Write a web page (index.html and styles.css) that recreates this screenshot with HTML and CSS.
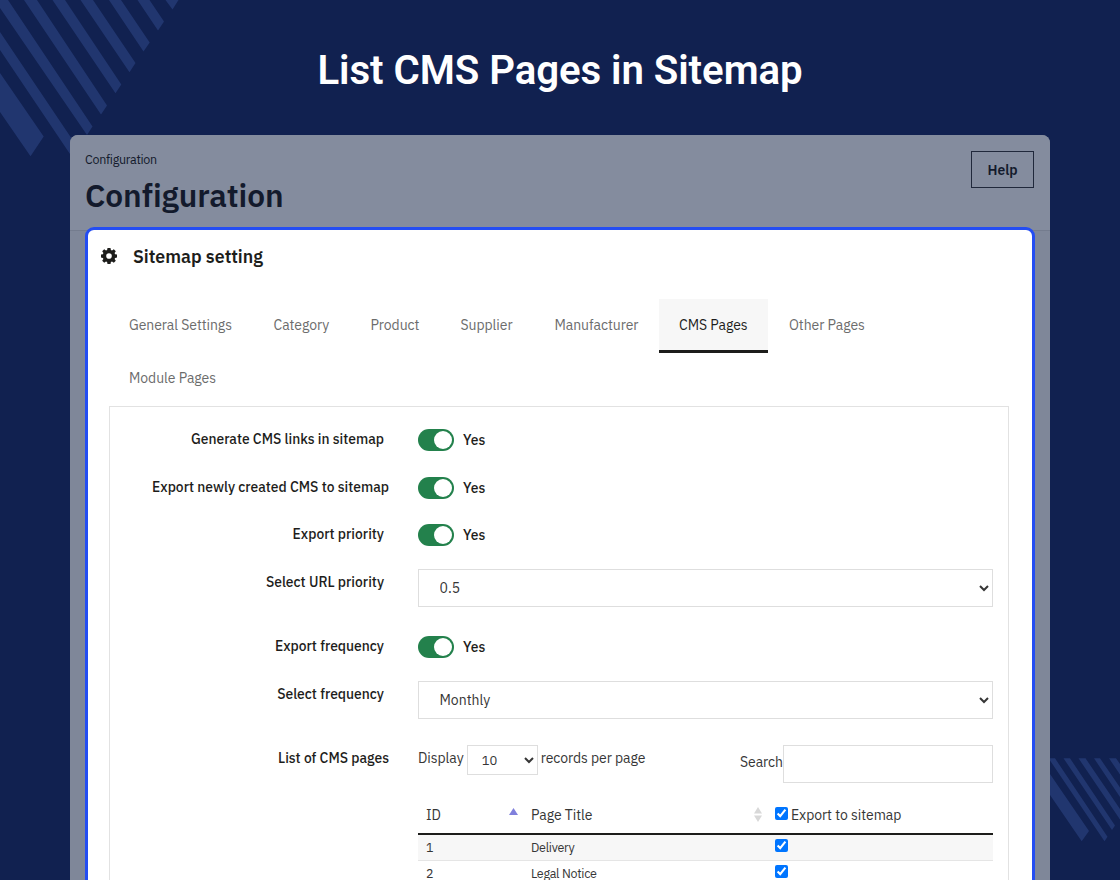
FILE: index.html
```html
<!DOCTYPE html>
<html lang="en">
<head>
    <meta charset="UTF-8">
    <meta name="viewport" content="width=device-width, initial-scale=1.0">
    <title>List CMS Pages in Sitemap</title>
    <link rel="stylesheet" href="styles.css">
</head>
<body>
    <!-- Background stripes -->
    <svg class="stripes" width="1120" height="880" viewBox="0 0 1120 880">
        <path d="M0 73 43.7 136.5 30.5 156.3 0 112Z M0 32 78 148 72 157 0 50Z M0 0H8L92.5 126.5 87 135 0 8Z M24 0H37L107 105.5 101 114.5Z M52.5 0H65L121.3 84.5 115.5 93.2Z M80.500 0H93L135.500 63 129.500 72.200Z M109 0H121L149.700 42.500 143.500 51.500Z M137.500 0H149.500L164 21.500 158 30.500Z M165.500 0H178.500L172.500 9.500Z"/>
        <path d="M1050 774 1089 831 1081.700 841.300 1050 795Z M1049 758.300H1055L1107.500 836.700 1104.500 841.300 1049 759Z M1063.500 758.300H1070L1115 825.500 1112 830Z M1078.500 758.300H1085.500L1120 809V819.500Z M1094 758.300H1100L1120 787.500V797Z M1109 758.300H1116L1120 764V774.500Z"/>
    </svg>

    <h1 class="headline">List CMS Pages in Sitemap</h1>

    <div class="window">
        <header class="page-head">
            <div>
                <div class="breadcrumb">Configuration</div>
                <h2 class="page-title">Configuration</h2>
            </div>
            <button class="help">Help</button>
        </header>

        <section class="card">
            <div class="card-title">
                <svg width="16" height="16" viewBox="0 0 16 16">
                    <path fill-rule="evenodd" d="M6.500 0h3l.4 2 1.100.5 1.800-1.200 2 2-1.200 1.800.5 1.100 1.900.3v3l-1.900.4-.5 1.100 1.200 1.800-2 2-1.800-1.200-1.100.5-.4 1.900h-3l-.4-1.900-1.100-.5-1.800 1.200-2-2 1.200-1.800-.5-1.100L0 9.500v-3l1.900-.3.5-1.100-1.200-1.800 2-2L5 2.500 6.100 2zM8 5.200a2.800 2.800 0 1 0 0 5.600 2.800 2.800 0 0 0 0-5.600z"/>
                </svg>
                <span>Sitemap setting</span>
            </div>

            <nav class="tabs">
                <a class="tab general">General Settings</a>
                <a class="tab category">Category</a>
                <a class="tab product">Product</a>
                <a class="tab supplier">Supplier</a>
                <a class="tab manufacturer">Manufacturer</a>
                <a class="tab cms active">CMS Pages</a>
                <a class="tab other">Other Pages</a>
                <a class="tab module">Module Pages</a>
            </nav>

            <div class="panel">
                <div class="row">
                    <label class="name">Generate CMS links in sitemap</label>
                    <div class="field"><span class="switch"></span><span class="yes">Yes</span></div>
                </div>
                <div class="row">
                    <label class="name wide">Export newly created CMS to sitemap</label>
                    <div class="field"><span class="switch"></span><span class="yes">Yes</span></div>
                </div>
                <div class="row">
                    <label class="name">Export priority</label>
                    <div class="field"><span class="switch"></span><span class="yes">Yes</span></div>
                </div>
                <div class="row select-row">
                    <label class="name">Select URL priority</label>
                    <select class="select"><option>0.5</option></select>
                </div>
                <div class="row">
                    <label class="name">Export frequency</label>
                    <div class="field"><span class="switch"></span><span class="yes">Yes</span></div>
                </div>
                <div class="row select-row">
                    <label class="name">Select frequency</label>
                    <select class="select"><option>Monthly</option></select>
                </div>
                <div class="row list-row">
                    <label class="name wide">List of CMS pages</label>
                    <div class="list">
                        <div class="list-tools">
                            <div class="length"><span class="display">Display</span><select class="select small"><option>10</option></select><span class="records">records per page</span></div>
                            <label class="search"><span>Search</span><input type="text"></label>
                        </div>
                        <table>
                            <thead>
                                <tr>
                                    <th class="col-id"><div class="th"><span>ID</span>
                                        <svg class="sort-asc" width="9" height="7" viewBox="0 0 9 7"><path d="M4.500 0 9 7H0Z"/></svg></div></th>
                                    <th class="col-title"><div class="th"><span>Page Title</span>
                                        <svg class="sort" width="8" height="15" viewBox="0 0 8 15"><path d="M4 0 8 6.500H0Z M0 8.500H8L4 15Z"/></svg></div></th>
                                    <th><div class="th export"><input type="checkbox" checked><span>Export to sitemap</span></div></th>
                                </tr>
                            </thead>
                            <tbody>
                                <tr><td>1</td><td>Delivery</td><td><input type="checkbox" checked></td></tr>
                                <tr><td>2</td><td>Legal Notice</td><td><input type="checkbox" checked></td></tr>
                            </tbody>
                        </table>
                    </div>
                </div>
            </div>
        </section>
    </div>
</body>
</html>
```

FILE: styles.css
```css
* { margin: 0; padding: 0; box-sizing: border-box; }
body { width: 1120px; height: 880px; overflow: hidden; background: #112150; color: #1d1d1b; font: 14px/20px "IBM Plex Sans", Roboto, Arial, sans-serif; letter-spacing: -0.06px; }

.stripes { position: absolute; top: 0; left: 0; z-index: -1; fill: #21366f; }
.headline { height: 135px; padding-top: 46px; text-align: center; color: #fff; font: 600 40.2px/49px Roboto, sans-serif; }

/* Dimmed back office page */
.window { width: 980px; height: 745px; margin: 0 auto; background: #7f8799; border-radius: 8px 8px 0 0; overflow: hidden; }
.page-head { display: flex; justify-content: space-between; height: 96px; padding: 16px 16px 0 15px; background: #848c9e; border-bottom: 1px solid #747c8e; color: #131a2c; }
.breadcrumb { font-size: 12.5px; line-height: 17px; letter-spacing: -0.28px; }
.page-title { margin-top: 6px; font-size: 31.7px; line-height: 44px; font-weight: 600; }
.help { width: 63px; height: 37px; border: 1px solid #20283b; background: none; color: #131a2c; font: 600 13.87px/20px "IBM Plex Sans", Roboto, sans-serif; }

/* Highlighted card */
.card { position: relative; height: 680px; margin: -4px 15px 0; background: #fff; border: 3px solid #244df2; border-radius: 9px; }
.card-title { display: flex; align-items: center; gap: 16px; height: 53px; padding-left: 13px; font-size: 17.8px; font-weight: 600; letter-spacing: 0; }
.card-title svg { margin-top: -1px; fill: #1d1d1b; }

/* Tabs */
.tabs { display: flex; flex-wrap: wrap; margin: 16px 20px 0 21px; }
.tab { height: 54px; padding: 16px 20px; margin-right: 1px; color: #6c6c6c; line-height: 20px; white-space: nowrap; }
.tab.active { background: #f7f7f7; border-bottom: 3px solid #1d1d1b; color: #1d1d1b; }
.general { width: 143.5px; }
.category { width: 96px; }
.product { width: 89px; }
.supplier { width: 93px; }
.manufacturer { width: 123.5px; }
.cms { width: 109px; }
.other { width: 130px; }
.module { padding-top: 15px; }

/* Form */
.panel { height: 500px; margin: -1px 23px 0 21px; padding-top: 21px; border: 1px solid #e2e2e2; border-bottom: 0; }
.row { display: flex; height: 47.5px; }
.name { width: 274px; margin-right: 34px; padding-top: 1px; text-align: right; font-size: 13.87px; font-weight: 500; letter-spacing: 0; }
.name.wide { width: 279px; margin-right: 29px; }
.field { display: flex; align-items: center; gap: 9px; height: 24px; }
.switch { width: 36px; height: 22px; padding: 2px; border-radius: 11px; background: #23814c; }
.switch::before { content: ""; display: block; width: 18px; height: 18px; margin-left: 14px; border-radius: 50%; background: #fff; }
.yes { font-size: 13.87px; font-weight: 500; letter-spacing: 0; }
.select-row { height: 64.5px; }
.select { width: 575px; height: 37.5px; margin-top: -1.5px; padding-left: 16.5px; background: #fff; border: 1px solid #dedede; border-radius: 0; color: #363636; font: inherit; }
.select.small { width: 71px; height: 30px; margin: 0 3px; padding-left: 10px; font-size: 13px; }

/* Pages list */
.list { width: 575px; }
.list-tools { display: flex; justify-content: space-between; height: 52px; margin-top: -2px; color: #363636; }
.length { display: flex; height: 30px; line-height: 27px; }
.search { display: flex; line-height: 35px; }
.search input { width: 210px; height: 38px; border: 1px solid #dedede; }
table { width: 575px; border-collapse: collapse; table-layout: fixed; color: #363636; }
.col-id { width: 105px; }
.col-title { width: 244px; }
th { height: 37px; padding: 0 8px; border-bottom: 2px solid #1d1d1b; font-size: 14px; font-weight: 400; text-align: left; }
td { height: 26px; padding: 0 8px; border-bottom: 1px solid #e5e5e5; font-size: 12.5px; line-height: 18px; letter-spacing: -0.28px; }
tbody tr:first-child { background: #f7f7f7; }
.th { display: flex; align-items: center; justify-content: space-between; }
.th.export { justify-content: flex-start; gap: 3px; }
.sort-asc { margin: -8px -3px 0 0; fill: #8080dc; }
.sort { margin: -1px -3px 0 0; fill: #d8d8d8; }
input[type="checkbox"] { display: block; width: 13px; height: 13px; }
td input[type="checkbox"] { margin-top: -4px; }
.th.export input { margin-top: -3px; }
```
